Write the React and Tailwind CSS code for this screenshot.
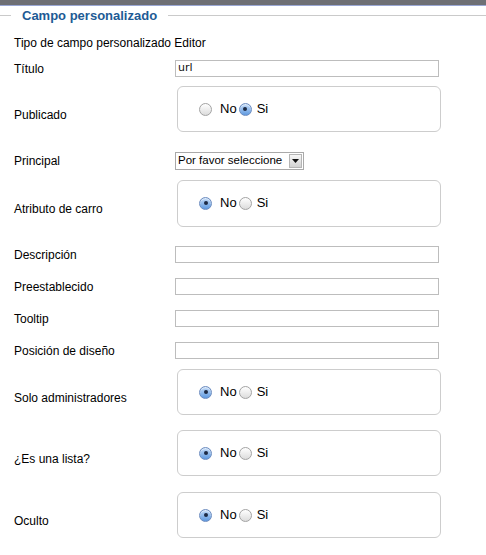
import React from 'react';

const font = { fontFamily: '"Liberation Sans", Arial, sans-serif' };

const Radio = ({ checked }) =>
  checked ? (
    <span className="relative inline-flex h-[13px] w-[13px] shrink-0 items-center justify-center rounded-full border border-[#6c8cbf] bg-gradient-to-b from-[#c3dbf7] to-[#5f9ae0] shadow-[inset_0_1px_1px_rgba(255,255,255,0.6)]">
      <span className="h-[4px] w-[4px] rounded-full bg-[#1d2a44]" />
    </span>
  ) : (
    <span className="inline-block h-[13px] w-[13px] shrink-0 rounded-full border border-[#a3a3a3] bg-gradient-to-b from-[#ffffff] to-[#dcdcdc]" />
  );

const RadioBox = ({ value, tall }) => (
  <div className={`ml-[2px] w-[264px] rounded-[6px] border border-[#cdcdcd] bg-white pt-[15px] ${tall ? 'h-[47px]' : 'h-[46px]'}`}>
    <div className="flex h-[14px] items-center pl-[21px] text-[13px] text-black">
      <Radio checked={value === 'no'} />
      <span className="ml-[8px] mr-[2px]">No</span>
      <Radio checked={value === 'si'} />
      <span className="ml-[5px]">Si</span>
    </div>
  </div>
);

const TextInput = ({ value }) => (
  <div className="flex h-[17px] w-[264px] items-center border border-[#bdbdbd] bg-white pl-[2px] text-[#111]" style={{ fontFamily: '"DejaVu Sans", Verdana, sans-serif', fontSize: '11px' }}>
    {value}
  </div>
);

const FakeSelect = () => (
  <div className="flex h-[18px] w-[129px] items-stretch border border-[#a9a9a9] bg-white">
    <span className="flex flex-1 items-center overflow-hidden whitespace-nowrap pl-[2px] text-[11.5px] text-black">
      Por favor seleccione
    </span>
    <span className="my-[1px] mr-[1px] flex w-[13px] items-center justify-center border border-[#b5b5b5] bg-gradient-to-b from-[#f7f7f7] to-[#d2d2d2]">
      <svg width="7" height="4" viewBox="0 0 7 4"><path d="M0 0h7L3.5 4z" fill="#111" /></svg>
    </span>
  </div>
);

const InputRow = ({ label, mt, children }) => (
  <div className={`flex items-center ${mt}`}>
    <span className="w-[161px] text-[12px] leading-[16px] text-black">{label}</span>
    {children}
  </div>
);

const BoxRow = ({ label, mt, value, tall }) => (
  <div className={`flex items-start ${mt}`}>
    <span className="mt-[21px] w-[161px] text-[12px] leading-[16px] text-black">{label}</span>
    <RadioBox value={value} tall={tall} />
  </div>
);

export default function App() {
  return (
    <div className="h-[555px] w-[486px] overflow-hidden bg-white" style={font}>
      <div className="h-[6px] border-b border-[#9aa7d4] bg-[#6e6f74]" />
      <div className="flex h-[19px] items-center">
        <span className="h-px w-[11px] bg-[#cacaca]" />
        <span className="px-[11px] text-[13px] font-bold leading-[19px] text-[#1e5b95]">Campo personalizado</span>
        <span className="h-px flex-1 bg-[#cacaca]" />
      </div>
      <div className="pl-[14px]">
        <div className="mt-[10px] text-[12px] leading-[16px] text-black">Tipo de campo personalizado Editor</div>
        <InputRow label="Título" mt="mt-[9px]">
          <TextInput value="url" />
        </InputRow>
        <BoxRow label="Publicado" mt="mt-[9px]" value="si" />
        <InputRow label="Principal" mt="mt-[20px]">
          <FakeSelect />
        </InputRow>
        <BoxRow label="Atributo de carro" mt="mt-[10px]" value="no" tall />
        <InputRow label="Descripción" mt="mt-[19px]">
          <TextInput value="" />
        </InputRow>
        <InputRow label="Preestablecido" mt="mt-[15px]">
          <TextInput value="" />
        </InputRow>
        <InputRow label="Tooltip" mt="mt-[15px]">
          <TextInput value="" />
        </InputRow>
        <InputRow label="Posición de diseño" mt="mt-[15px]">
          <TextInput value="" />
        </InputRow>
        <BoxRow label="Solo administradores" mt="mt-[10px]" value="no" />
        <BoxRow label="¿Es una lista?" mt="mt-[15px]" value="no" />
        <BoxRow label="Oculto" mt="mt-[16px]" value="no" />
      </div>
    </div>
  );
}
